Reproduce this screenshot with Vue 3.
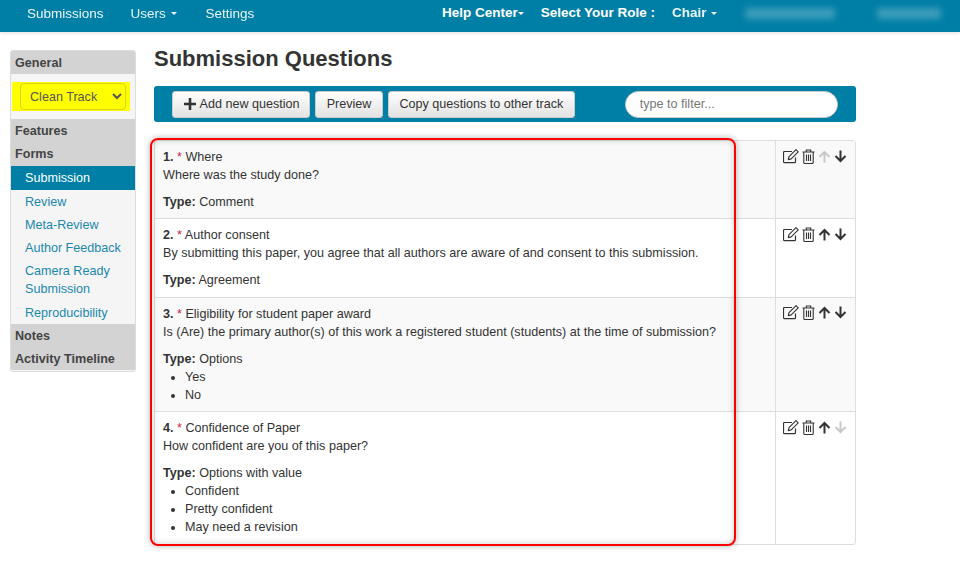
<script setup>
const sideLinks = [
  { label: 'Submission', active: true },
  { label: 'Review' },
  { label: 'Meta-Review' },
  { label: 'Author Feedback' },
  { label: 'Camera Ready Submission' },
  { label: 'Reproducibility' },
]
const questions = [
  { n: 1, title: 'Where', text: 'Where was the study done?', type: 'Comment', options: [], up: false, down: true },
  { n: 2, title: 'Author consent', text: 'By submitting this paper, you agree that all authors are aware of and consent to this submission.', type: 'Agreement', options: [], up: true, down: true },
  { n: 3, title: 'Eligibility for student paper award', text: 'Is (Are) the primary author(s) of this work a registered student (students) at the time of submission?', type: 'Options', options: ['Yes', 'No'], up: true, down: true },
  { n: 4, title: 'Confidence of Paper', text: 'How confident are you of this paper?', type: 'Options with value', options: ['Confident', 'Pretty confident', 'May need a revision'], up: true, down: false },
]
</script>

<template>
  <div class="app">
    <header class="nav">
      <div class="nav-left">
        <span>Submissions</span>
        <span>Users <i class="caret"></i></span>
        <span>Settings</span>
      </div>
      <div class="nav-right">
        <b class="help">Help Center<i class="caret tight"></i></b>
        <b class="role">Select Your Role :</b>
        <b class="chair">Chair <i class="caret"></i></b>
        <span class="blur b1"></span>
        <span class="blur b2"></span>
      </div>
    </header>
    <div class="page">
      <aside class="side">
        <div class="side-head">General</div>
        <div class="track">
          <div class="hl">
            <select class="track-select">
              <option>Clean Track</option>
            </select>
          </div>
        </div>
        <div class="side-head">Features</div>
        <div class="side-head forms">Forms</div>
        <ul class="links">
          <li v-for="l in sideLinks" :key="l.label" :class="{ active: l.active }">{{ l.label }}</li>
        </ul>
        <div class="side-head">Notes</div>
        <div class="side-head">Activity Timeline</div>
      </aside>
      <main class="main">
        <h1>Submission Questions</h1>
        <div class="toolbar">
          <button class="btn add">
            <svg class="plus" width="12" height="12" viewBox="0 0 12 12"><path d="M4.7 0h2.6v4.7H12v2.6H7.3V12H4.7V7.3H0V4.7h4.7z" fill="#333"/></svg>
            Add new question
          </button>
          <button class="btn">Preview</button>
          <button class="btn">Copy questions to other track</button>
          <input class="filter" placeholder="type to filter..." />
        </div>
        <div class="table">
          <div v-for="(q, i) in questions" :key="q.n" class="row" :class="{ odd: i % 2 === 0 }">
            <div class="cell">
              <div><b>{{ q.n }}.</b> <span class="req">*</span> {{ q.title }}</div>
              <div>{{ q.text }}</div>
              <div class="type"><b>Type:</b> {{ q.type }}</div>
              <ul v-if="q.options.length" class="opts">
                <li v-for="o in q.options" :key="o">{{ o }}</li>
              </ul>
            </div>
            <div class="actions">
              <svg width="16" height="15" viewBox="0 0 16 15" fill="none" stroke="#333">
                <path d="M12.5 8.5v4.2a1 1 0 0 1-1 1H1.5a1 1 0 0 1-1-1V3.5a1 1 0 0 1 1-1h7.5" stroke-width="1.2"/>
                <path d="M6 7.6l7-6.9 2.2 2.2-7 7-2.9.7z" stroke-width="1.1" stroke-linejoin="round"/>
              </svg>
              <svg width="13" height="15" viewBox="0 0 13 15" fill="none" stroke="#333" stroke-width="1.1">
                <path d="M.5 3h12M4.3 3V1h4.4v2M1.8 3v10.5a1 1 0 0 0 1 1h7.4a1 1 0 0 0 1-1V3"/>
                <path d="M4.5 5.5v6.5M6.5 5.5v6.5M8.5 5.5v6.5"/>
              </svg>
              <svg class="arrow" width="13" height="13" viewBox="0 0 13 13" :class="{ off: !q.up }">
                <path d="M6.5 12.5V2M1.5 7l5-5 5 5" fill="none" stroke-width="2"/>
              </svg>
              <svg class="arrow" width="13" height="13" viewBox="0 0 13 13" :class="{ off: !q.down }">
                <path d="M6.5 .5V11M1.5 6l5 5 5-5" fill="none" stroke-width="2"/>
              </svg>
            </div>
          </div>
        </div>
        <div class="red"></div>
      </main>
    </div>
  </div>
</template>

<style>
html, body { margin: 0; background: #fff; }
</style>

<style scoped>
.app { font: 12.6px/18px "Liberation Sans", Arial, sans-serif; color: #333; height: 582px; overflow: hidden; }
.nav { height: 32px; background: #007fa6; color: #fff; display: flex; align-items: center; box-shadow: 0 1px 4px rgba(0,0,0,.12); padding-bottom: 5px; box-sizing: border-box; position: relative; font-size: 13.5px; }
.nav-left { display: flex; gap: 27px; padding-left: 27px; opacity: .92; }
.nav-left span:nth-child(2) { padding-right: 2px; }
.nav-right { display: flex; align-items: center; position: absolute; left: 442px; top: 4px; }
.caret { display: inline-block; width: 0; height: 0; border-left: 3.5px solid transparent; border-right: 3.5px solid transparent; border-top: 3.5px solid currentColor; vertical-align: middle; margin-left: 1px; }
.caret.tight { margin-left: 0; }
.role { margin-left: 17px; }
.chair { margin-left: 17px; opacity: .92; }
.blur { display: block; height: 11px; background: rgba(255,255,255,.24); filter: blur(3px); border-radius: 4px; }
.b1 { width: 90px; margin-left: 28px; }
.b2 { width: 64px; margin-left: 42px; }
.page { display: flex; padding: 18px 0 0 10px; }
.side { width: 126px; height: 322px; box-sizing: border-box; background: #f5f5f5; border: 1px solid #ddd; border-radius: 3px; overflow: hidden; flex: none; }
.side-head { background: #d3d3d3; font-weight: bold; color: #444; padding: 3px 4px 2px; line-height: 18px; }
.side-head.forms { padding-bottom: 3px; }
.track { height: 45px; box-sizing: border-box; padding: 8px 0 0 1px; }
.hl { background: #ff0; width: 118px; height: 29px; padding: 1px 0 0 8px; box-sizing: border-box; }
.track-select { width: 106px; height: 27px; background: #ff0; border: 1px solid #d4d41e; border-radius: 4px; color: #555; font: 12.6px "Liberation Sans", Arial, sans-serif; padding: 0 5px; outline: none; }
.links { list-style: none; margin: 0; padding: 0; }
.links li { padding: 2.6px 4px 2.6px 14px; color: #1a87ad; line-height: 18px; }
.links li:last-child { padding-top: 3.1px; padding-bottom: 2.5px; }
.links li.active { background: #007fa6; color: #fff; padding: 3px 4px 3px 14px; }
.main { position: relative; width: 702px; margin-left: 18px; flex: none; }
h1 { margin: 0; font-size: 22px; line-height: 18px; font-weight: bold; color: #333; height: 36px; }
.toolbar { height: 36px; background: #007fa6; border-radius: 3px; display: flex; align-items: center; padding-left: 18px; gap: 5px; }
.btn { height: 27px; padding: 0 10.5px; border: 1px solid #ccc; border-radius: 3px; background: linear-gradient(#fff, #e2e2e2); color: #333; font: 12.6px "Liberation Sans", Arial, sans-serif; white-space: nowrap; display: inline-flex; align-items: center; }
.btn.add { padding-right: 9.5px; }
.plus { margin-right: 4px; }
.filter { width: 213px; height: 27px; box-sizing: border-box; margin-left: 45px; border: 1px solid #ccc; border-radius: 14px; padding: 0 14px; font: 12.6px "Liberation Sans", Arial, sans-serif; outline: none; background: #fff; }
.filter::placeholder { color: #777; }
.table { margin-top: 18px; border: 1px solid #ddd; border-radius: 3px; }
.row { display: flex; border-top: 1px solid #ddd; }
.row:first-child { border-top: 0; }
.row.odd { background: #f9f9f9; }
.cell { width: 621px; box-sizing: border-box; padding: 7px 8px 7.4px; border-right: 1px solid #ddd; }
.req { color: #c7254e; }
.type { margin-top: 9px; }
.opts { margin: 0; padding: 0 0 0 22px; }
.actions { display: flex; align-items: flex-start; gap: 3px; padding: 7.5px 0 0 7px; }
.arrow { stroke: #333; margin-top: 1px; }
.arrow.off { stroke: #c8c8c8; }
.red { position: absolute; left: -4px; top: 88px; width: 586px; height: 408px; box-sizing: border-box; border: 2px solid #f00; border-radius: 8px; box-shadow: 0 0 6px rgba(0,0,0,.3), inset 0 0 6px rgba(0,0,0,.2); pointer-events: none; }
</style>
